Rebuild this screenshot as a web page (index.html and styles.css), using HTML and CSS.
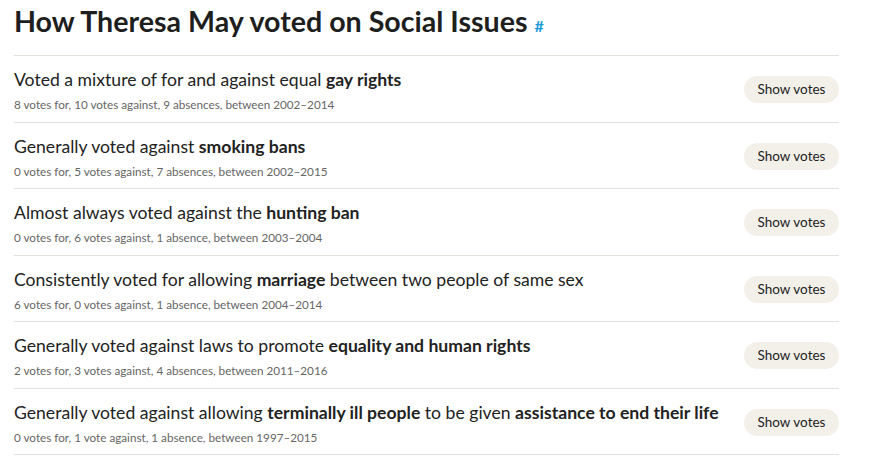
FILE: index.html
```html
<!DOCTYPE html>
<html lang="en">

<head>
  <meta charset="UTF-8">
  <title>How Theresa May voted on Social Issues</title>
  <link rel="stylesheet" href="styles.css">
</head>

<body>
  <div class="policies">
    <h2 class="policies-tit">How Theresa May voted on Social Issues <a class="anchor" href="#social">#</a></h2>
    <ul class="policy-list">
      <li class="policy">
        <div class="policy-text">
          <p class="policy-desc">Voted a mixture of for and against equal <b>gay rights</b></p>
          <p class="policy-meta">8 votes for, 10 votes against, 9 absences, between 2002–2014</p>
        </div>
        <button class="show-votes">Show votes</button>
      </li>
      <li class="policy">
        <div class="policy-text">
          <p class="policy-desc">Generally voted against <b>smoking bans</b></p>
          <p class="policy-meta">0 votes for, 5 votes against, 7 absences, between 2002–2015</p>
        </div>
        <button class="show-votes">Show votes</button>
      </li>
      <li class="policy">
        <div class="policy-text">
          <p class="policy-desc">Almost always voted against the <b>hunting ban</b></p>
          <p class="policy-meta">0 votes for, 6 votes against, 1 absence, between 2003–2004</p>
        </div>
        <button class="show-votes">Show votes</button>
      </li>
      <li class="policy">
        <div class="policy-text">
          <p class="policy-desc">Consistently voted for allowing <b>marriage</b> between two people of same sex</p>
          <p class="policy-meta">6 votes for, 0 votes against, 1 absence, between 2004–2014</p>
        </div>
        <button class="show-votes">Show votes</button>
      </li>
      <li class="policy">
        <div class="policy-text">
          <p class="policy-desc">Generally voted against laws to promote <b>equality and human rights</b></p>
          <p class="policy-meta">2 votes for, 3 votes against, 4 absences, between 2011–2016</p>
        </div>
        <button class="show-votes">Show votes</button>
      </li>
      <li class="policy">
        <div class="policy-text">
          <p class="policy-desc">Generally voted against allowing <b>terminally ill people</b> to be given <b>assistance to end their life</b></p>
          <p class="policy-meta">0 votes for, 1 vote against, 1 absence, between 1997–2015</p>
        </div>
        <button class="show-votes">Show votes</button>
      </li>
    </ul>
  </div>
</body>

</html>
```

FILE: styles.css
```css
body,
h2,
p {
  margin: 0;
}

ul {
  margin: 0;
  padding: 0;
  list-style: none;
}

body {
  background-color: #fff;
  color: #222;
  font-family: Lato, "Noto Sans", sans-serif;
}

.policies {
  width: 825px;
  padding-left: 14px;
}

.policies-tit {
  font-size: 28.6px;
  font-weight: bold;
  line-height: 40px;
  padding: 1px 0 14px;
  color: #1e1e1e;
}

.anchor {
  font-size: 16px;
  line-height: 1;
  font-weight: bold;
  color: #1a9bd7;
  text-decoration: none;
}

.policy-list {
  border-top: 1px solid #e4e2dc;
}

.policy {
  display: flex;
  justify-content: space-between;
  align-items: flex-start;
  height: 66.5px;
  padding-top: 12px;
  box-sizing: border-box;
  border-bottom: 1px solid #e4e2dc;
}

.policy-desc {
  font-size: 17.6px;
  line-height: 24px;
  color: #222;
}

.policy-desc b {
  font-weight: bold;
}

.policy-meta {
  font-size: 11.7px;
  line-height: 18px;
  margin-top: 3px;
  color: #666;
}

.show-votes {
  width: 95px;
  height: 27px;
  margin-top: 8px;
  border: 0;
  border-radius: 14px;
  background-color: #f3f0ea;
  color: #222;
  font: 13.5px/27px Lato, "Noto Sans", sans-serif;
  padding: 0;
  cursor: pointer;
}
```
